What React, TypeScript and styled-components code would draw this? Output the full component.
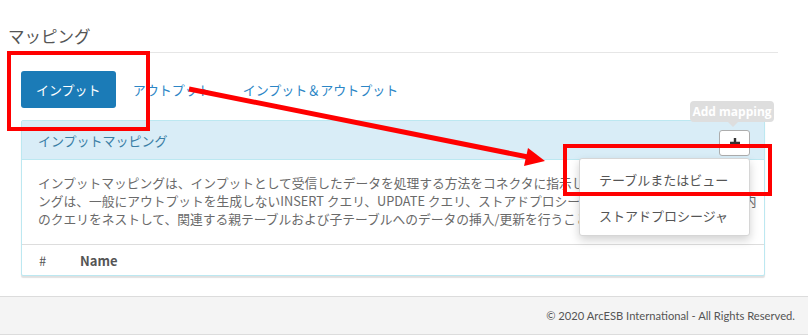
import React from 'react';
import styled, { createGlobalStyle } from 'styled-components';

const GlobalStyle = createGlobalStyle`
  html, body {
    margin: 0;
    padding: 0;
    background: #ffffff;
  }
  body {
    font-family: "Noto Sans CJK JP", "Noto Sans", sans-serif;
    color: #555;
  }
`;

const Page = styled.div`
  position: relative;
  width: 808px;
  height: 335px;
  display: flex;
  flex-direction: column;
  overflow: hidden;
`;

const Main = styled.div`
  flex: 1;
  padding: 0 30px 0 8px;
`;

const Title = styled.h2`
  margin: 0;
  padding-top: 25px;
  height: 27px;
  font-size: 16.5px;
  font-weight: 400;
  line-height: 22px;
  color: #555;
  border-bottom: 1px solid #e6e6e6;
`;

const Content = styled.div`
  padding: 18px 13px 0 13px;
`;

const Tabs = styled.div`
  display: flex;
  align-items: center;
  height: 37px;
`;

const Tab = styled.div<{ $active?: boolean }>`
  display: flex;
  align-items: center;
  height: 37px;
  padding: 0 15px;
  margin-right: 2px;
  border-radius: 3px;
  font-size: 13px;
  background: ${p => (p.$active ? '#1b7bb7' : 'transparent')};
  color: ${p => (p.$active ? '#ffffff' : '#2c86c6')};
`;

const Panel = styled.div`
  margin-top: 12px;
  border: 1px solid #bce8f1;
  border-radius: 2px;
  background: #fff;
  box-shadow: 0 2px 1px rgba(0, 0, 0, 0.12);
`;

const PanelHeader = styled.div`
  display: flex;
  align-items: center;
  justify-content: space-between;
  height: 38px;
  padding: 0 14px 0 16px;
  background: #d9edf7;
  border-bottom: 1px solid #bce8f1;
  font-size: 13px;
  color: #3b7fa6;
`;

const PlusButton = styled.div`
  width: 29px;
  height: 24px;
  border: 1px solid #adadad;
  border-radius: 3px;
  background: #fff;
  display: flex;
  align-items: center;
  justify-content: center;
  align-self: flex-start;
  margin-top: 9px;
`;

const PanelBody = styled.div`
  padding: 14px 16px 16px 16px;
  font-size: 12.75px;
  line-height: 18px;
  color: #6a6a6a;
  white-space: nowrap;
  overflow: hidden;
  border-bottom: 1px solid #dddddd;
`;

const TableHead = styled.div`
  display: flex;
  align-items: center;
  height: 30px;
  padding-left: 17px;
  font-size: 13px;
  font-weight: 700;
  color: #555;
`;

const HashCol = styled.span`
  width: 41px;
  font-weight: 400;
`;

const Footer = styled.div`
  height: 37px;
  display: flex;
  align-items: center;
  justify-content: flex-end;
  padding-right: 13px;
  background: #f4f4f4;
  border-top: 1px solid #dcdcdc;
  border-bottom: 1px solid #dcdcdc;
  font-family: Lato, "Noto Sans", sans-serif;
  font-size: 11.2px;
  color: #555;
`;

const Tooltip = styled.div`
  position: absolute;
  left: 690px;
  top: 101px;
  width: 84px;
  height: 21px;
  border-radius: 4px;
  background: #dedede;
  color: #ffffff;
  font-family: "Open Sans", sans-serif;
  font-size: 12px;
  font-weight: 700;
  display: flex;
  align-items: center;
  justify-content: center;
  &::after {
    content: '';
    position: absolute;
    left: 38px;
    bottom: -5px;
    border-left: 5px solid transparent;
    border-right: 5px solid transparent;
    border-top: 5px solid #dedede;
  }
`;

const Dropdown = styled.div`
  position: absolute;
  left: 579px;
  top: 158px;
  width: 169px;
  padding: 2px 0;
  background: #fff;
  border: 1px solid #d6d6d6;
  border-radius: 3px;
  box-shadow: 0 4px 10px rgba(0, 0, 0, 0.18);
`;

const DropdownItem = styled.div`
  height: 36px;
  display: flex;
  align-items: center;
  padding-left: 19px;
  font-size: 13px;
  color: #555;
`;

const Highlight = styled.div<{ $x: number; $y: number; $w: number; $h: number }>`
  position: absolute;
  left: ${p => p.$x}px;
  top: ${p => p.$y}px;
  width: ${p => p.$w}px;
  height: ${p => p.$h}px;
  border: 4px solid #ff0000;
  box-sizing: border-box;
  pointer-events: none;
`;

const ArrowLayer = styled.svg`
  position: absolute;
  left: 0;
  top: 0;
  pointer-events: none;
`;

const App: React.FC = () => {
  return (
    <Page>
      <GlobalStyle />
      <Main>
        <Title>マッピング</Title>
        <Content>
          <Tabs>
            <Tab $active>インプット</Tab>
            <Tab>アウトプット</Tab>
            <Tab>インプット＆アウトプット</Tab>
          </Tabs>
          <Panel>
            <PanelHeader>
              <span>インプットマッピング</span>
              <PlusButton>
                <svg width="12" height="12" viewBox="0 0 12 12">
                  <path d="M6 1v10M1 6h10" stroke="#333" strokeWidth="2.4" />
                </svg>
              </PlusButton>
            </PanelHeader>
            <PanelBody>
              インプットマッピングは、インプットとして受信したデータを処理する方法をコネクタに指示します。インプットマッピ
              <br />
              ングは、一般にアウトプットを生成しないINSERT クエリ、UPDATE クエリ、ストアドプロシージャを表します。マッピング内
              <br />
              のクエリをネストして、関連する親テーブルおよび子テーブルへのデータの挿入/更新を行うことができます。
            </PanelBody>
            <TableHead>
              <HashCol>#</HashCol>
              <span>Name</span>
            </TableHead>
          </Panel>
        </Content>
      </Main>
      <Footer>© 2020 ArcESB International - All Rights Reserved.</Footer>

      <Tooltip>Add mapping</Tooltip>
      <Dropdown>
        <DropdownItem>テーブルまたはビュー</DropdownItem>
        <DropdownItem>ストアドプロシージャ</DropdownItem>
      </Dropdown>

      <Highlight $x={7} $y={51} $w={143} $h={80} />
      <Highlight $x={563} $y={144} $w={209} $h={52} />
      <ArrowLayer width="808" height="335" viewBox="0 0 808 335">
        <line x1="189" y1="89" x2="528" y2="157" stroke="#ff0000" strokeWidth="5" />
        <polygon points="545,161 524,166 528,148" fill="#ff0000" />
      </ArrowLayer>
    </Page>
  );
};

export default App;
